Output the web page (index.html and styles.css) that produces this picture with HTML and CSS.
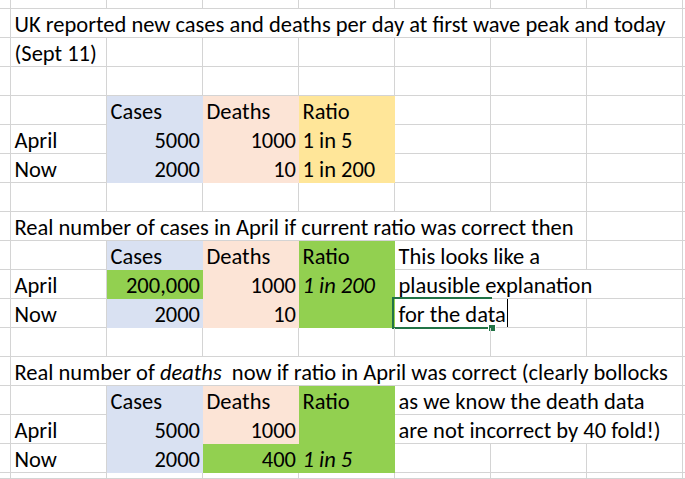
FILE: index.html
```html
<!DOCTYPE html>
<html>
<head>
<meta charset="utf-8">
<link rel="stylesheet" href="styles.css">
</head>
<body>
<div class="sheet">
  <!-- partial top row -->
  <div class="c"></div><div class="c"></div><div class="c"></div><div class="c"></div><div class="c"></div><div class="c"></div><div class="c"></div><div class="c"></div><div class="c e"></div>
  <!-- A -->
  <div class="c"></div><div class="c s7">UK reported new cases and deaths per day at first wave peak and today</div><div class="c e"></div>
  <!-- B -->
  <div class="c"></div><div class="c">(Sept 11)</div><div class="c"></div><div class="c"></div><div class="c"></div><div class="c"></div><div class="c"></div><div class="c"></div><div class="c e"></div>
  <!-- C -->
  <div class="c"></div><div class="c"></div><div class="c"></div><div class="c"></div><div class="c"></div><div class="c"></div><div class="c"></div><div class="c"></div><div class="c e"></div>
  <!-- D -->
  <div class="c"></div><div class="c"></div><div class="c blue">Cases</div><div class="c peach">Deaths</div><div class="c yellow">Ratio</div><div class="c"></div><div class="c"></div><div class="c"></div><div class="c e"></div>
  <!-- E -->
  <div class="c"></div><div class="c">April</div><div class="c blue r">5000</div><div class="c peach r">1000</div><div class="c yellow">1 in 5</div><div class="c"></div><div class="c"></div><div class="c"></div><div class="c e"></div>
  <!-- F -->
  <div class="c"></div><div class="c">Now</div><div class="c blue r">2000</div><div class="c peach r">10</div><div class="c yellow">1 in 200</div><div class="c"></div><div class="c"></div><div class="c"></div><div class="c e"></div>
  <!-- G -->
  <div class="c"></div><div class="c"></div><div class="c"></div><div class="c"></div><div class="c"></div><div class="c"></div><div class="c"></div><div class="c"></div><div class="c e"></div>
  <!-- H -->
  <div class="c"></div><div class="c s6">Real number of cases in April if current ratio was correct then</div><div class="c"></div><div class="c e"></div>
  <!-- I -->
  <div class="c"></div><div class="c"></div><div class="c blue">Cases</div><div class="c peach">Deaths</div><div class="c green">Ratio</div><div class="c s2">This looks like a</div><div class="c"></div><div class="c e"></div>
  <!-- J -->
  <div class="c"></div><div class="c">April</div><div class="c green r">200,000</div><div class="c peach r">1000</div><div class="c green i">1 in 200</div><div class="c s3">plausible explanation</div><div class="c e"></div>
  <!-- K -->
  <div class="c"></div><div class="c">Now</div><div class="c blue r">2000</div><div class="c peach r">10</div><div class="c green"></div><div class="c s2 active">for the data<span class="caret"></span><span class="sel"><span class="handle"></span></span></div><div class="c"></div><div class="c e"></div>
  <!-- L -->
  <div class="c"></div><div class="c"></div><div class="c"></div><div class="c"></div><div class="c"></div><div class="c"></div><div class="c"></div><div class="c"></div><div class="c e"></div>
  <!-- M -->
  <div class="c"></div><div class="c s7 pre">Real number of <i>deaths</i>  now if ratio in April was correct (clearly bollocks</div><div class="c e"></div>
  <!-- N -->
  <div class="c"></div><div class="c"></div><div class="c blue">Cases</div><div class="c peach">Deaths</div><div class="c green">Ratio</div><div class="c s3">as we know the death data</div><div class="c e"></div>
  <!-- O -->
  <div class="c"></div><div class="c">April</div><div class="c blue r">5000</div><div class="c peach r">1000</div><div class="c green"></div><div class="c s3">are not incorrect by 40 fold!)</div><div class="c e"></div>
  <!-- P -->
  <div class="c"></div><div class="c">Now</div><div class="c blue r">2000</div><div class="c green r">400</div><div class="c green i">1 in 5</div><div class="c"></div><div class="c"></div><div class="c"></div><div class="c e"></div>
  <!-- partial bottom row -->
  <div class="c"></div><div class="c"></div><div class="c"></div><div class="c"></div><div class="c"></div><div class="c"></div><div class="c"></div><div class="c"></div><div class="c e"></div>
</div>
</body>
</html>
```
FILE: styles.css
```css
html, body {
  margin: 0;
  padding: 0;
  background: #fff;
}
.sheet {
  width: 685px;
  height: 479px;
  overflow: hidden;
  display: grid;
  grid-template-columns: 11px repeat(7, 96px) 1fr;
  grid-template-rows: 9px repeat(16, 29px) 1fr;
  font-family: Carlito, "Open Sans", Lato, sans-serif;
  font-size: 22.5px;
  color: #000;
}
.c {
  box-sizing: border-box;
  border-right: 1px solid #d4d4d4;
  border-bottom: 1px solid #d4d4d4;
  display: flex;
  align-items: flex-end;
  justify-content: flex-start;
  padding: 0 2px 1px 3.5px;
  line-height: 1;
  white-space: nowrap;
  min-width: 0;
  position: relative;
}
.c.e { border-right: none; }
.r { justify-content: flex-end; }
.i { font-style: italic; }
.pre { white-space: pre; }
.s2 { grid-column: span 2; }
.s3 { grid-column: span 3; }
.s6 { grid-column: span 6; }
.s7 { grid-column: span 7; }
.blue { background: #d9e1f2; border-color: #d9e1f2; }
.peach { background: #fce4d6; border-color: #fce4d6; }
.yellow { background: #ffe699; border-color: #ffe699; }
.green { background: #92d050; border-color: #92d050; }
.active { overflow: visible; }
.sel {
  position: absolute;
  left: -3px;
  top: -2px;
  width: 100px;
  height: 32px;
  box-sizing: border-box;
  border: 2px solid #217346;
  border-right: none;
}
.handle {
  position: absolute;
  right: -3px;
  bottom: -4px;
  width: 6px;
  height: 6px;
  background: #217346;
  outline: 1px solid #fff;
}
.caret {
  display: inline-block;
  width: 1px;
  height: 28px;
  background: #000;
  margin-left: 1px;
  margin-bottom: -1px;
}
```
